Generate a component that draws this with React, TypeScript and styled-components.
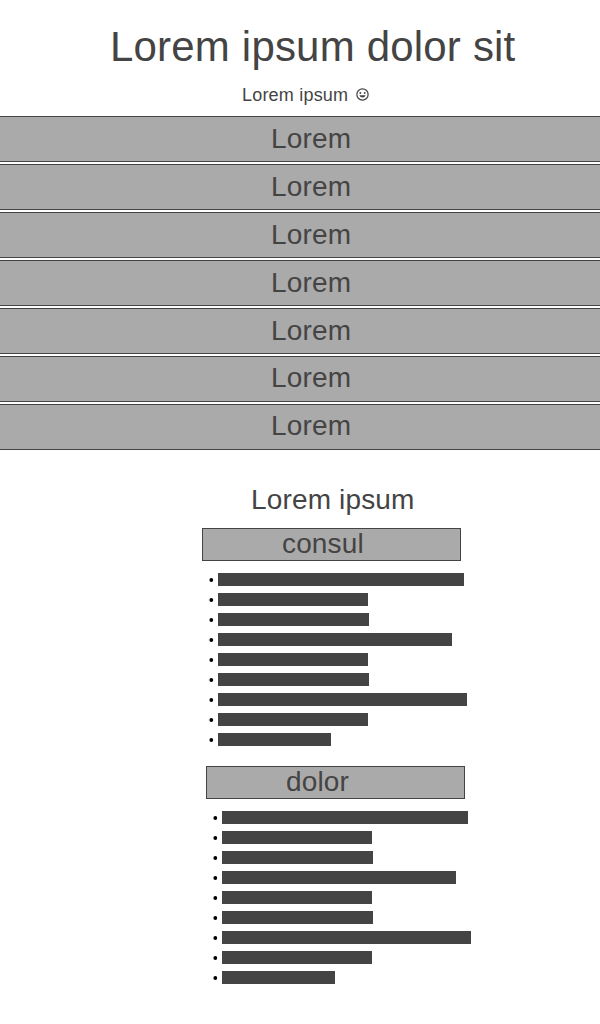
import React from "react";
import styled, { createGlobalStyle } from "styled-components";

const ink = "#444444";
const fill = "#aaaaaa";

const GlobalStyle = createGlobalStyle`
  body {
    margin: 0;
    background: #ffffff;
    color: ${ink};
    font-family: "Liberation Sans", Arial, sans-serif;
    letter-spacing: 0.15px;
  }
`;

const Page = styled.main`
  width: 100%;
  height: 1024px;
  overflow: hidden;
`;

const Header = styled.header`
  height: 116px;
  box-sizing: border-box;
  padding-top: 22px;
`;

const Title = styled.h1`
  margin: 0 0 0 110px;
  font-size: 42px;
  line-height: 50px;
  font-weight: 400;
  letter-spacing: 0.19px;
  white-space: nowrap;
`;

const Subtitle = styled.p`
  display: flex;
  align-items: center;
  margin: 12px 0 0 242px;
  font-size: 18px;
  line-height: 22px;
  letter-spacing: 0.2px;
  white-space: nowrap;
`;

const Face = styled.svg`
  display: block;
  margin: -1px 0 0 6.5px;
  width: 15px;
  height: 15px;
`;

const Menu = styled.nav`
  display: flex;
  flex-direction: column;
  gap: 2px;
`;

const MenuItem = styled.div<{ $lift: number }>`
  box-sizing: border-box;
  height: 46px;
  padding: ${(p) => 6 - p.$lift}px 0 0 271px;
  background: ${fill};
  border: solid ${ink};
  border-width: 1px 0;
  font-size: 28px;
  line-height: 32px;
`;

const SectionTitle = styled.h2`
  margin: 34px 0 0 251px;
  font-size: 28px;
  line-height: 32px;
  font-weight: 400;
`;

const Group = styled.section<{ $left: number; $top: number }>`
  margin: ${(p) => p.$top}px 0 0 ${(p) => p.$left}px;
`;

const GroupTitle = styled.h3`
  box-sizing: border-box;
  width: 259px;
  height: 33px;
  margin: 0;
  padding-left: 79px;
  background: ${fill};
  border: 1px solid ${ink};
  font-size: 28px;
  line-height: 30px;
  font-weight: 400;
`;

const List = styled.ul`
  display: flex;
  flex-direction: column;
  gap: 7px;
  margin: 12px 0 0;
  padding: 0 0 0 7px;
  list-style: none;
`;

const Row = styled.li`
  display: flex;
  align-items: center;
  height: 13px;
`;

const Dot = styled.svg`
  width: 5px;
  height: 5px;
  margin-right: 4px;
`;

const Bar = styled.span<{ $width: number }>`
  width: ${(p) => p.$width}px;
  height: 13px;
  background: ${ink};
`;

const lifts = [0, 0, 0, 0, 0, 1, 1];
const widths = [246, 150, 151, 234, 150, 151, 249, 150, 113];

function BarList() {
  return (
    <List>
      {widths.map((w, i) => (
        <Row key={i}>
          <Dot viewBox="0 0 5 5">
            <circle cx="2.3" cy="3" r="1.9" fill="#000000" />
          </Dot>
          <Bar $width={w} />
        </Row>
      ))}
    </List>
  );
}

export default function App() {
  return (
    <Page>
      <GlobalStyle />
      <Header>
        <Title>Lorem ipsum dolor sit</Title>
        <Subtitle>
          Lorem ipsum
          <Face viewBox="0 0 24 24" fill={ink}>
            <path d="M12 2a10 10 0 1 0 0 20 10 10 0 0 0 0-20zm0 18a8 8 0 1 1 0-16 8 8 0 0 1 0 16z" />
            <circle cx="8.5" cy="9.5" r="1.5" />
            <circle cx="15.5" cy="9.5" r="1.5" />
            <path d="M7 13h10a5.2 5.2 0 0 1-10 0z" />
          </Face>
        </Subtitle>
      </Header>
      <Menu>
        {lifts.map((lift, i) => (
          <MenuItem key={i} $lift={lift}>
            Lorem
          </MenuItem>
        ))}
      </Menu>
      <SectionTitle>Lorem ipsum</SectionTitle>
      <Group $left={202} $top={12}>
        <GroupTitle>consul</GroupTitle>
        <BarList />
      </Group>
      <Group $left={206} $top={20}>
        <GroupTitle>dolor</GroupTitle>
        <BarList />
      </Group>
    </Page>
  );
}
